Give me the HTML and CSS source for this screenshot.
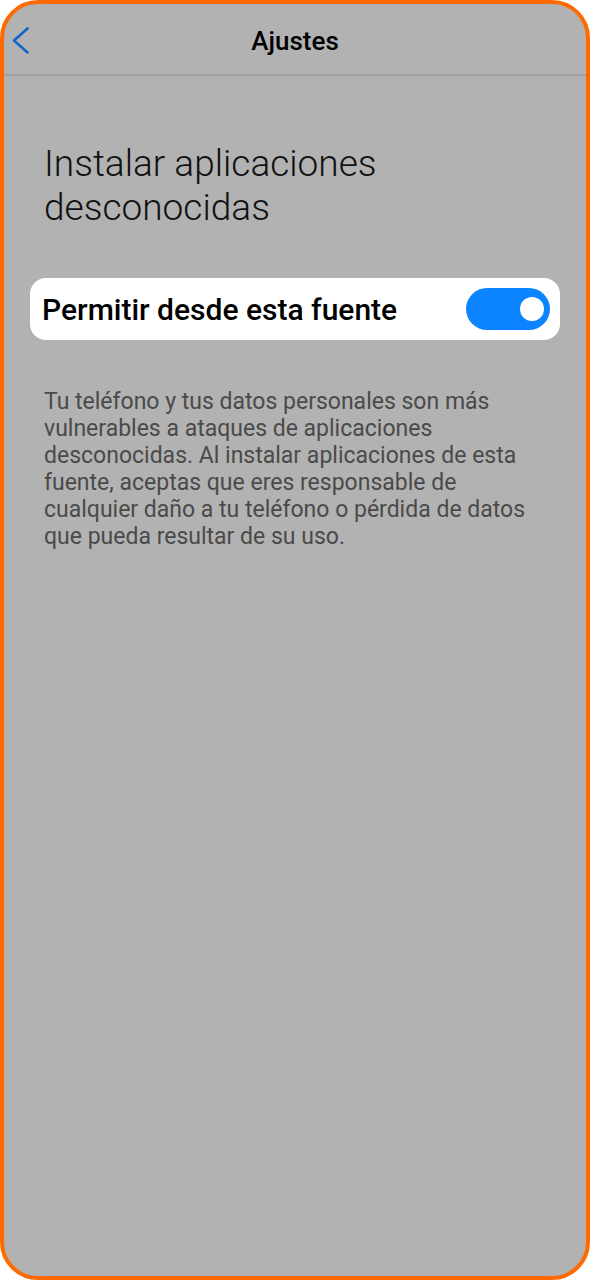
FILE: index.html
```html
<!DOCTYPE html>
<html lang="es">
<head>
<meta charset="utf-8">
<title>Ajustes</title>
<link rel="stylesheet" href="styles.css">
</head>
<body>
<div class="phone">
  <header class="topbar">
    <button class="back" aria-label="Atrás">
      <svg width="20" height="28" viewBox="0 0 20 28"><path d="M15.5 1.5 L2 13.5 L15.5 25.5" fill="none" stroke="#1565c8" stroke-width="2.6" stroke-linecap="round" stroke-linejoin="round"/></svg>
    </button>
    <h1 class="title">Ajustes</h1>
  </header>
  <main class="content">
    <h2 class="heading">Instalar aplicaciones desconocidas</h2>
    <div class="card">
      <span class="card-label">Permitir desde esta fuente</span>
      <span class="toggle"><span class="knob"></span></span>
    </div>
    <p class="desc">Tu teléfono y tus datos personales son más vulnerables a ataques de aplicaciones desconocidas. Al instalar aplicaciones de esta fuente, aceptas que eres responsable de cualquier daño a tu teléfono o pérdida de datos que pueda resultar de su uso.</p>
  </main>
</div>
</body>
</html>
```
FILE: styles.css
```css
* { box-sizing: border-box; }
html, body { margin: 0; padding: 0; background: #ffffff; }
body { font-family: Roboto, "Liberation Sans", sans-serif; }
.phone {
  width: 590px;
  height: 1280px;
  border: 4px solid #ff6a00;
  border-radius: 38px;
  background: #b2b2b2;
  overflow: hidden;
}
.topbar {
  position: relative;
  height: 72px;
  padding-top: 3px;
  border-bottom: 2px solid #a0a0a0;
  display: flex;
  align-items: center;
  justify-content: center;
}
.back {
  position: absolute;
  left: 8px;
  top: 23px;
  background: none;
  border: 0;
  padding: 0;
  width: 20px;
  height: 28px;
}
.back svg { display: block; }
.title {
  margin: 0;
  font-size: 26px;
  font-weight: 500;
  color: #000;
}
.content {
  padding: 66px 26px 0 26px;
}
.heading {
  margin: 0 0 0 14px;
  font-size: 37px;
  font-weight: 300;
  line-height: 44px;
  color: #111;
  width: 420px;
}
.card {
  margin-top: 48px;
  height: 62px;
  background: #fff;
  border-radius: 16px;
  display: flex;
  align-items: center;
  justify-content: space-between;
  padding: 0 10px 0 12px;
}
.card-label {
  font-size: 30px;
  font-weight: 500;
  color: #000;
}
.toggle {
  width: 84px;
  height: 42px;
  border-radius: 21px;
  background: #0d84ff;
  display: flex;
  align-items: center;
  justify-content: flex-end;
  padding-right: 6px;
}
.knob {
  width: 24px;
  height: 24px;
  border-radius: 50%;
  background: #fff;
}
.desc {
  margin: 48px 0 0 14px;
  font-size: 23px;
  line-height: 27px;
  color: #4a4a4a;
  width: 492px;
}
```
